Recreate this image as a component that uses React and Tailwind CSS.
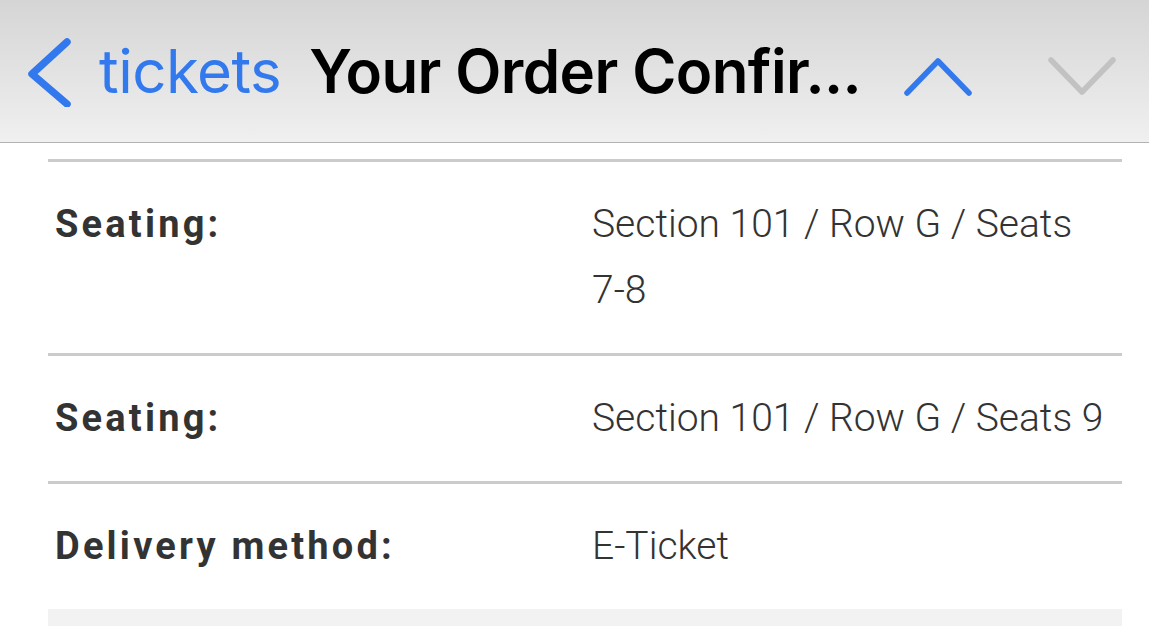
export default function App() {
  const rows = [
    { label: "Seating:", value: <>Section 101 / Row G / Seats <span className="whitespace-nowrap">7-8</span></> },
    { label: "Seating:", value: "Section 101 / Row G / Seats 9" },
    { label: "Delivery method:", value: "E-Ticket" },
  ];
  return (
    <div className="w-[1149px] h-[626px] overflow-hidden bg-white">
      <header className="h-[143px] border-b border-[#b3b3b3] bg-gradient-to-b from-[#d5d5d5] to-[#f0f0f0] flex items-center" style={{ fontFamily: "Inter, 'Liberation Sans', sans-serif" }}>
        <svg className="ml-[26px] mt-[2px] shrink-0" width="48" height="70" viewBox="0 0 48 70" fill="none">
          <path d="M41 5 L6 37 L41 67" stroke="#3379ee" strokeWidth="7.5" strokeLinecap="round" strokeLinejoin="round" />
        </svg>
        <span className="ml-[25px] text-[60px] leading-none text-[#3379ee] tracking-[-0.5px]">tickets</span>
        <span className="ml-[28px] text-[60px] leading-none font-semibold text-black tracking-[-0.6px] whitespace-nowrap">Your Order Confir...</span>
        <svg className="ml-[42px] mt-[12px] shrink-0" width="70" height="42" viewBox="0 0 70 42" fill="none">
          <path d="M4 37 L35 5 L66 37" stroke="#3379ee" strokeWidth="5.5" strokeLinecap="round" strokeLinejoin="round" />
        </svg>
        <svg className="ml-[74px] mt-[10px] shrink-0" width="70" height="42" viewBox="0 0 70 42" fill="none">
          <path d="M4 5 L35 37 L66 5" stroke="#c2c2c2" strokeWidth="5.5" strokeLinecap="round" strokeLinejoin="round" />
        </svg>
      </header>
      <div className="ml-[48px] w-[1074px] mt-[16px]" style={{ fontFamily: "Roboto, 'Liberation Sans', sans-serif" }}>
        {rows.map((r, i) => (
          <div key={i} className="border-t-[3px] border-[#cbcbcb] pt-[29px] pb-[30px] grid grid-cols-[544px_1fr] leading-[66px] text-[#333333]">
            <div className="pl-[7px] text-[38px] font-bold tracking-[3.2px]">{r.label}</div>
            <div className="text-[39px] font-light pr-[8px]">{r.value}</div>
          </div>
        ))}
        <div className="h-[40px] bg-[#f2f2f2]" />
      </div>
    </div>
  );
}
